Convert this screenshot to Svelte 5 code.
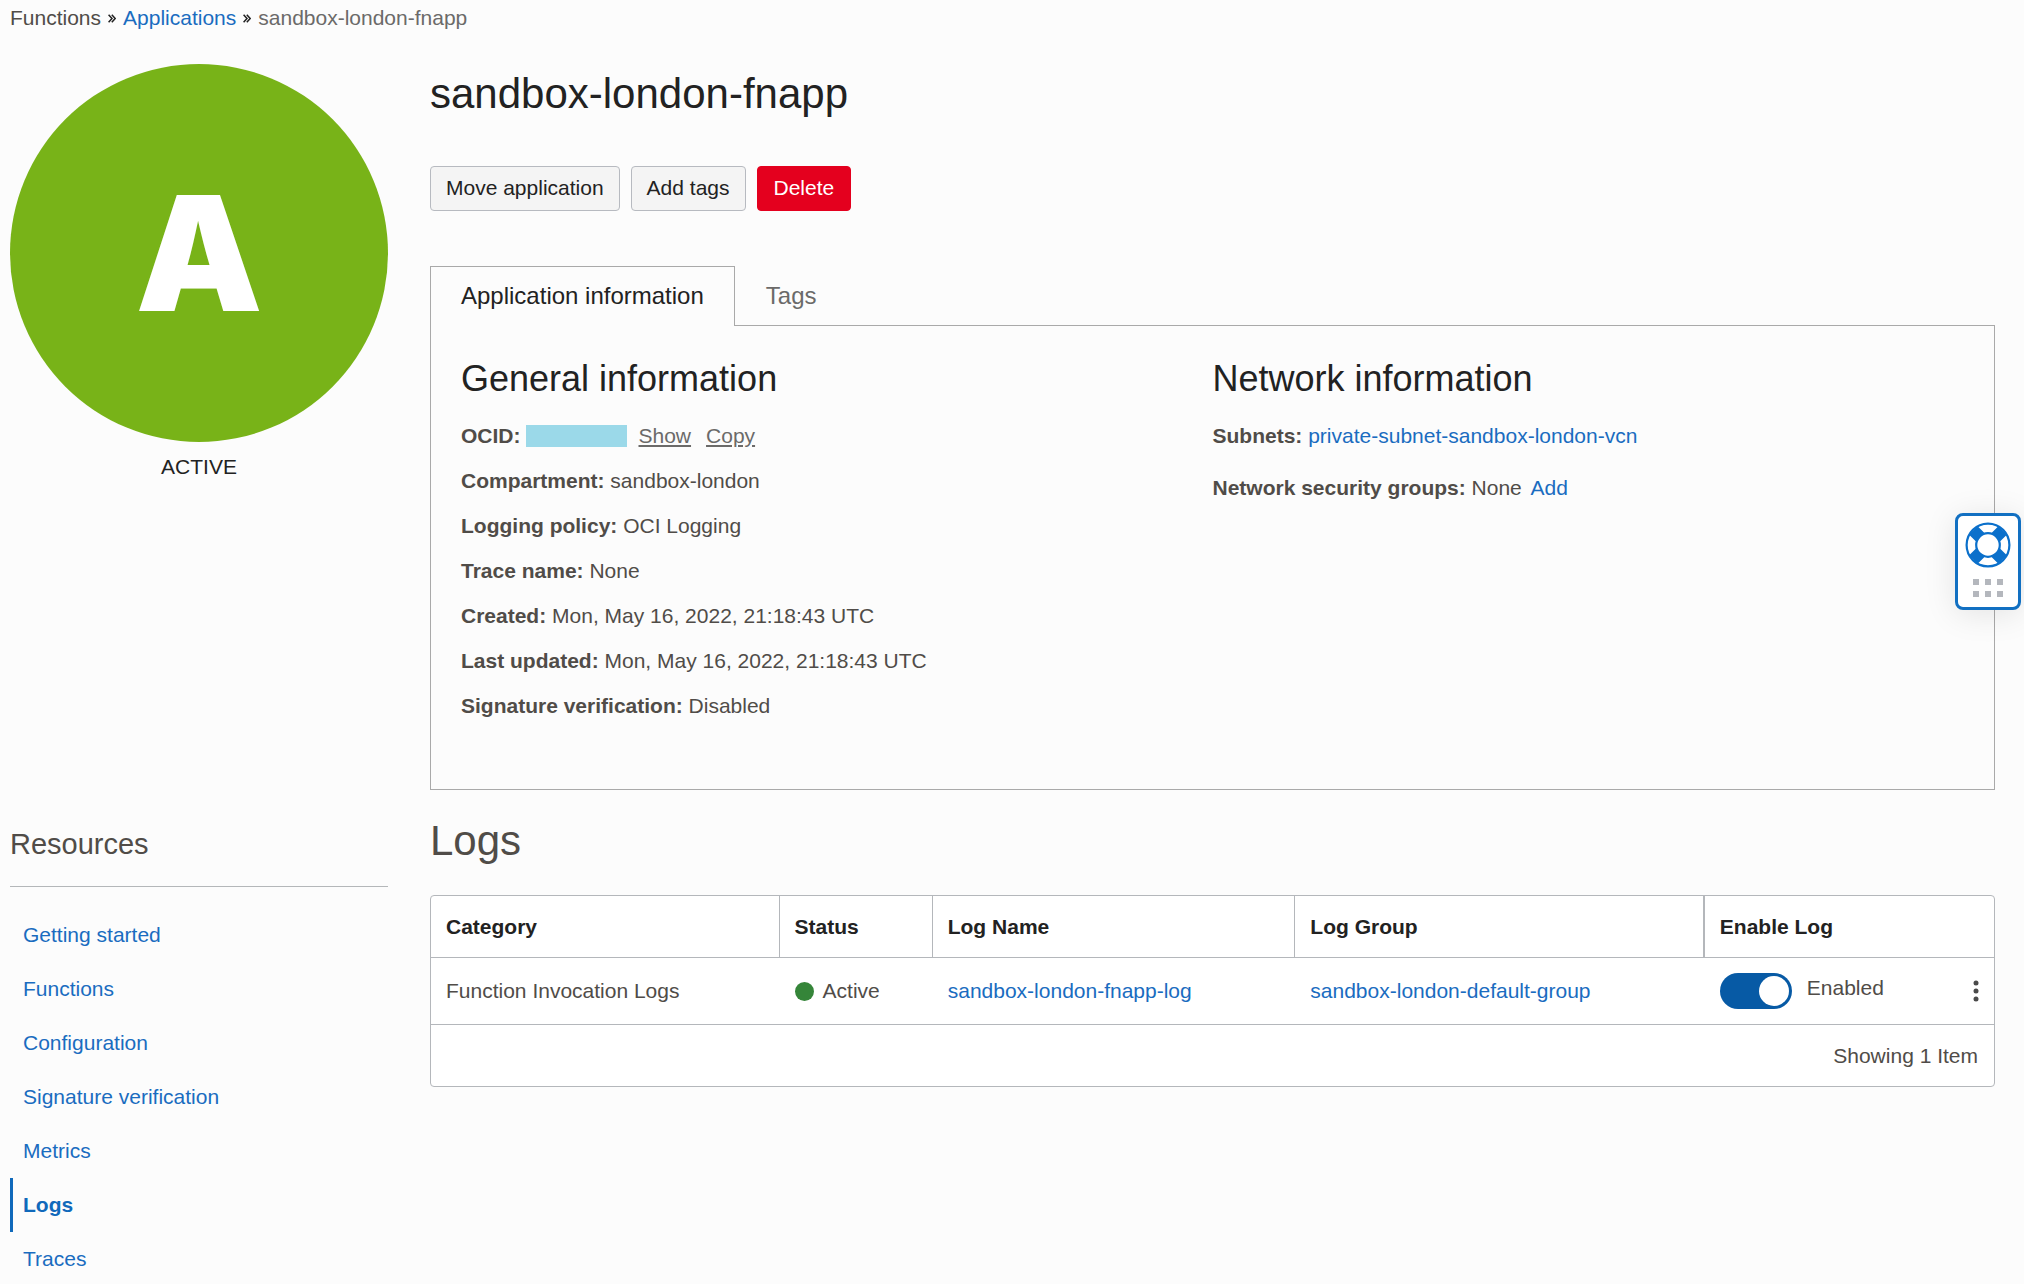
<script>
  const details = [
    ['Compartment:', 'sandbox-london'],
    ['Logging policy:', 'OCI Logging'],
    ['Trace name:', 'None'],
    ['Created:', 'Mon, May 16, 2022, 21:18:43 UTC'],
    ['Last updated:', 'Mon, May 16, 2022, 21:18:43 UTC'],
    ['Signature verification:', 'Disabled']
  ];
  const resources = [
    'Getting started',
    'Functions',
    'Configuration',
    'Signature verification',
    'Metrics',
    'Logs',
    'Traces'
  ];
  let current = $state('Logs');
  let enabled = $state(true);
</script>

{#snippet chevrons()}
  <svg class="chevrons" viewBox="0 0 8 9" width="8" height="9" aria-hidden="true">
    <path d="M0.6 0.7 4 4.5 0.6 8.3M3.8 0.7 7.2 4.5 3.8 8.3" fill="none" stroke="#222" stroke-width="1.5" />
  </svg>
{/snippet}

<div class="page">
  <nav class="crumbs" aria-label="Breadcrumb">
    <span>Functions</span>
    {@render chevrons()}
    <a href="#applications">Applications</a>
    {@render chevrons()}
    <span class="here">sandbox-london-fnapp</span>
  </nav>

  <div class="layout">
    <div class="status">
      <div class="badge">A</div>
      <div class="state">ACTIVE</div>
    </div>

    <main class="overview">
      <h1>sandbox-london-fnapp</h1>
      <div class="actions">
        <button type="button">Move application</button>
        <button type="button">Add tags</button>
        <button type="button" class="danger">Delete</button>
      </div>

      <div class="tabs" role="tablist">
        <button type="button" role="tab" class="tab active" aria-selected="true">Application information</button>
        <button type="button" role="tab" class="tab" aria-selected="false">Tags</button>
      </div>
      <div class="panel" role="tabpanel">
        <section>
          <h2>General information</h2>
          <ul class="facts">
            <li class="ocid">
              <b>OCID:</b>
              <span class="masked"></span>
              <a href="#show">Show</a>
              <a href="#copy">Copy</a>
            </li>
            {#each details as [name, value]}
              <li><b>{name}</b> {value}</li>
            {/each}
          </ul>
        </section>
        <section>
          <h2>Network information</h2>
          <ul class="facts loose">
            <li><b>Subnets:</b> <a href="#subnet">private-subnet-sandbox-london-vcn</a></li>
            <li><b>Network security groups:</b> None <a class="add" href="#add">Add</a></li>
          </ul>
        </section>
      </div>
    </main>

    <aside class="resources">
      <h3>Resources</h3>
      <nav aria-label="Resources">
        {#each resources as item}
          <a href="#{item}" class:current={item === current} onclick={() => (current = item)}>{item}</a>
        {/each}
      </nav>
    </aside>

    <section class="logs">
      <h2 class="title">Logs</h2>
      <div class="frame">
        <table>
          <colgroup>
            <col class="c-category" />
            <col class="c-status" />
            <col class="c-name" />
            <col class="c-group" />
            <col />
          </colgroup>
          <thead>
            <tr>
              <th>Category</th>
              <th>Status</th>
              <th>Log Name</th>
              <th class="strong">Log Group</th>
              <th>Enable Log</th>
            </tr>
          </thead>
          <tbody>
            <tr>
              <td>Function Invocation Logs</td>
              <td><span class="live"><i class="dot"></i>Active</span></td>
              <td><a href="#log">sandbox-london-fnapp-log</a></td>
              <td><a href="#group">sandbox-london-default-group</a></td>
              <td>
                <div class="enable">
                  <label>
                    <input type="checkbox" role="switch" bind:checked={enabled} />
                    <span>{enabled ? 'Enabled' : 'Disabled'}</span>
                  </label>
                  <button type="button" class="more" aria-label="Actions">
                    <svg viewBox="0 0 6 22" width="6" height="22" aria-hidden="true">
                      <circle cx="3" cy="3" r="2.5" />
                      <circle cx="3" cy="11" r="2.5" />
                      <circle cx="3" cy="19" r="2.5" />
                    </svg>
                  </button>
                </div>
              </td>
            </tr>
          </tbody>
        </table>
        <div class="count">Showing 1 Item</div>
      </div>
    </section>
  </div>

  <button type="button" class="help" aria-label="Help">
    <svg viewBox="0 0 46 46" width="46" height="46" aria-hidden="true">
      <path d="M8.4 8.4 15.5 15.5M37.6 8.4 30.5 15.5M8.4 37.6 15.5 30.5M37.6 37.6 30.5 30.5" stroke="#0b70cb" stroke-width="12" />
      <circle cx="23" cy="23" r="21.4" fill="none" stroke="#0b70cb" stroke-width="2.2" />
      <circle cx="23" cy="23" r="11.8" fill="#fff" stroke="#0b70cb" stroke-width="2.2" />
    </svg>
    <svg viewBox="0 0 30 18" width="30" height="18" aria-hidden="true" fill="#b4b7bd">
      <path d="M0 0h6v6H0zM12 0h6v6h-6zM24 0h6v6h-6zM0 12h6v6H0zM12 12h6v6h-6zM24 12h6v6h-6z" />
    </svg>
  </button>
</div>

<style>
  :global(body) {
    background: #fcfcfc;
  }
  .page {
    font: 21px/30px 'Liberation Sans', Arial, sans-serif;
    color: #504c48;
    padding: 0 29px 0 10px;
  }
  a {
    color: #1a6cc0;
    text-decoration: none;
  }
  h1,
  h2,
  h3,
  ul {
    margin: 0;
    padding: 0;
    font-weight: 400;
    list-style: none;
  }
  button {
    font: inherit;
    cursor: pointer;
  }
  .crumbs {
    display: flex;
    align-items: center;
    gap: 7px;
    height: 36px;
  }
  .here {
    color: #6b6a69;
  }
  .layout {
    display: grid;
    grid-template-columns: 378px minmax(0, 1fr);
    column-gap: 42px;
    padding-top: 28px;
  }
  .badge {
    display: flex;
    align-items: center;
    justify-content: center;
    aspect-ratio: 1;
    border-radius: 50%;
    background: #78b318;
    color: #fff;
    font: 900 160px/1 Inter, sans-serif;
  }
  .state {
    text-align: center;
    color: #222;
    padding-top: 10px;
  }
  h1 {
    font-size: 42px;
    line-height: 48px;
    color: #222;
    padding-top: 6px;
  }
  .actions {
    display: flex;
    gap: 11px;
    padding: 48px 0 55px;
  }
  .actions button {
    height: 45px;
    padding: 0 15px 1px;
    border: 1px solid #b7bac0;
    border-radius: 4px;
    background: #f4f4f4;
    color: #222;
  }
  .actions .danger {
    padding: 0 16px 1px;
    background: #e4001e;
    border-color: #e4001e;
    color: #fff;
  }
  .tabs {
    display: flex;
    margin-bottom: -1px;
  }
  .tab {
    height: 60px;
    padding: 0 30px 2px;
    border: 1px solid transparent;
    border-bottom: 0;
    background: none;
    font-size: 24px;
    color: #6b6a69;
  }
  .tab.active {
    position: relative;
    z-index: 1;
    border-color: #a9a9a9;
    background: #fcfcfc;
    color: #222;
  }
  .panel {
    display: grid;
    grid-template-columns: 1fr 1fr;
    border: 1px solid #a9a9a9;
    padding: 32px 30px 61px;
  }
  .panel h2 {
    font-size: 36px;
    line-height: 42px;
    color: #222;
    padding-bottom: 13px;
  }
  .facts li {
    line-height: 45px;
  }
  .loose {
    display: grid;
    gap: 7px;
  }
  .ocid {
    display: flex;
    align-items: center;
  }
  .ocid a {
    color: #6b6a69;
    text-decoration: underline;
    margin-right: 15px;
  }
  .masked {
    width: 101px;
    height: 22px;
    margin: 0 12px 0 5px;
    background: #9bd9e9;
  }
  .add {
    margin-left: 3px;
  }
  .resources {
    padding-top: 36px;
  }
  .resources h3 {
    font-size: 29px;
    line-height: 36px;
    padding-bottom: 24px;
    border-bottom: 1px solid #b4b7b9;
  }
  .resources nav {
    display: grid;
    padding-top: 21px;
  }
  .resources a {
    line-height: 54px;
    padding-left: 10px;
    border-left: 3px solid transparent;
  }
  .resources .current {
    border-color: #1069bb;
    color: #1069bb;
    font-weight: 700;
  }
  .title {
    font-size: 42px;
    line-height: 48px;
    padding: 27px 0 30px;
  }
  .frame {
    border: 1px solid #b4b7bb;
    border-radius: 4px;
    background: #fff;
  }
  table {
    width: 100%;
    table-layout: fixed;
    border-collapse: separate;
    border-spacing: 0;
  }
  .c-category {
    width: 22.3%;
  }
  .c-status {
    width: 9.8%;
  }
  .c-name {
    width: 23.2%;
  }
  .c-group {
    width: 26.2%;
  }
  th,
  td {
    padding: 0 15px;
    text-align: left;
    border-bottom: 1px solid #b4b7bb;
  }
  th {
    height: 61px;
    color: #222;
    border-right: 1px solid #b4b7bb;
  }
  th.strong {
    border-right-width: 2px;
  }
  th:last-child {
    border-right: 0;
  }
  td {
    height: 66px;
  }
  .live {
    display: flex;
    align-items: center;
    gap: 9px;
  }
  .dot {
    width: 19px;
    height: 19px;
    border-radius: 50%;
    background: #358539;
  }
  .enable {
    display: flex;
    align-items: center;
    justify-content: space-between;
  }
  label {
    display: flex;
    align-items: flex-start;
    gap: 15px;
  }
  input {
    appearance: none;
    width: 72px;
    height: 36px;
    margin: 0;
    padding: 3px;
    box-sizing: border-box;
    border-radius: 18px;
    background: #8b8f94;
    display: flex;
  }
  input:checked {
    background: #075aa5;
    justify-content: flex-end;
  }
  input::before {
    content: '';
    width: 30px;
    height: 30px;
    border-radius: 50%;
    background: #fff;
  }
  .more {
    display: flex;
    padding: 0;
    border: 0;
    background: none;
    fill: #4a4a4a;
  }
  .count {
    text-align: right;
    line-height: 61px;
    padding-right: 16px;
  }
  .help {
    position: fixed;
    top: 513px;
    right: 3px;
    z-index: 2;
    display: flex;
    flex-direction: column;
    align-items: center;
    gap: 11px;
    width: 66px;
    height: 97px;
    padding: 6px 0 0;
    border: 3px solid #1270c2;
    border-radius: 8px;
    background: #fff;
    box-shadow: 0 4px 32px rgba(0, 0, 0, 0.1);
  }
</style>
